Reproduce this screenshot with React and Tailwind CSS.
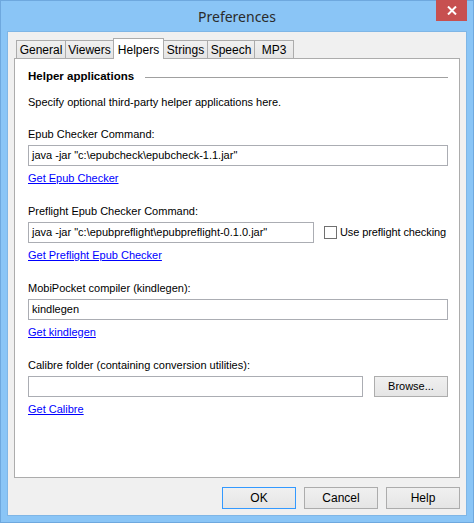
import { useState } from "react";

const tabs = [
  { name: "General", w: "w-[50px]" },
  { name: "Viewers", w: "w-[49px]" },
  { name: "Helpers", w: "w-[51px]" },
  { name: "Strings", w: "w-[45px]" },
  { name: "Speech", w: "w-[48px]" },
  { name: "MP3", w: "w-[40px]" },
];

function Field({ label, value, link, children }) {
  return (
    <div className="flex flex-col">
      <div className="h-4 leading-4">{label}</div>
      <div className="mt-[3px] flex items-center h-[21px]">
        {/* campo de texto */}
        <div className="h-[21px] flex-1 min-w-0 border border-[#abadb3] bg-white px-[3px] leading-[19px] whitespace-nowrap overflow-hidden">
          {value}
        </div>
        {children}
      </div>
      <div className="mt-[4px] h-4 leading-4">
        <a href="#" className="text-[#0000ff] underline">
          {link}
        </a>
      </div>
    </div>
  );
}

function DlgButton({ label, focused }) {
  return (
    <button
      type="button"
      className={
        "h-[22px] w-[74px] border bg-gradient-to-b from-[#f0f0f0] to-[#e5e5e5] text-black leading-[20px] " +
        (focused ? "border-[#3399ff]" : "border-[#acacac]")
      }
    >
      {label}
    </button>
  );
}

export default function App() {
  const [active, setActive] = useState("Helpers");
  const [usePreflight, setUsePreflight] = useState(false);

  return (
    <div
      className="w-[474px] h-[523px] bg-[#8ac5f6] border border-[#6ea8de] flex flex-col text-[11px] text-black"
      style={{ fontFamily: '"Liberation Sans", Arial, sans-serif' }}
    >
      {/* barra de título */}
      <div className="relative h-[30px] flex items-center justify-center">
        <span className="text-[14px] text-[#2b2b2b]" style={{ fontFamily: '"Noto Sans", sans-serif' }}>
          Preferences
        </span>
        <div className="absolute top-[-1px] right-[6px] w-[31px] h-[21px] bg-[#c75050] flex items-center justify-center">
          <svg width="10" height="9" viewBox="0 0 10 9">
            <path d="M1 0.5 L9 8.5 M9 0.5 L1 8.5" stroke="white" strokeWidth="2" />
          </svg>
        </div>
      </div>

      {/* área cliente */}
      <div className="mx-[6px] mb-[6px] flex-1 bg-[#f0f0f0] border border-[#7fb6e6] flex flex-col px-[6px] pt-[6px] pb-[6px]">
        {/* pestañas */}
        <div className="relative z-10 flex items-end h-[20px] pl-[2px]">
          {tabs.map((t, i) => {
            const sel = t.name === active;
            return (
              <div
                key={t.name}
                onClick={() => setActive(t.name)}
                className={
                  t.w +
                  " border border-[#acacac] flex justify-center text-[12px] " +
                  (i > 0 ? "-ml-px " : "") +
                  (sel
                    ? "relative z-10 h-[21px] -mb-px bg-white border-b-0 items-start pt-[2px]"
                    : "h-[18px] bg-gradient-to-b from-[#f0f0f0] to-[#e5e5e5] border-b-0 items-center pt-[1px]")
                }
              >
                {t.name}
              </div>
            );
          })}
        </div>

        {/* panel */}
        <div className="h-[420px] bg-white border border-[#acacac] pl-[13px] pr-[11px] pt-[10px] flex flex-col text-[11px]">
          <div className="flex items-center h-4">
            <span className="font-bold text-[11.5px]">Helper applications</span>
            <div className="ml-[11px] flex-1 h-px bg-[#a0a0a0]" />
          </div>
          <div className="mt-[9px] h-4 leading-4">Specify optional third-party helper applications here.</div>

          <div className="mt-[16px] flex flex-col gap-[17px]">
            <Field
              label="Epub Checker Command:"
              value={'java -jar "c:\\epubcheck\\epubcheck-1.1.jar"'}
              link="Get Epub Checker"
            />
            <Field
              label="Preflight Epub Checker Command:"
              value={'java -jar "c:\\epubpreflight\\epubpreflight-0.1.0.jar"'}
              link="Get Preflight Epub Checker"
            >
              <label className="ml-[10px] w-[124px] shrink-0 flex items-center gap-[3px] whitespace-nowrap">
                <span
                  onClick={() => setUsePreflight(!usePreflight)}
                  className="w-[13px] h-[13px] shrink-0 border border-[#707070] bg-white flex items-center justify-center text-[10px] leading-none"
                >
                  {usePreflight ? "✓" : ""}
                </span>
                <span className="tracking-[-0.1px]">Use preflight checking</span>
              </label>
            </Field>
            <Field label="MobiPocket compiler (kindlegen):" value="kindlegen" link="Get kindlegen" />
            <Field label="Calibre folder (containing conversion utilities):" value="" link="Get Calibre">
              <button
                type="button"
                className="ml-[11px] h-[21px] w-[74px] shrink-0 border border-[#adadad] bg-gradient-to-b from-[#f0f0f0] to-[#e5e5e5] leading-[19px]"
              >
                Browse...
              </button>
            </Field>
          </div>
        </div>

        {/* botones */}
        <div className="mt-[9px] flex justify-end gap-[8px] text-[12px]">
          <DlgButton label="OK" focused />
          <DlgButton label="Cancel" />
          <DlgButton label="Help" />
        </div>
      </div>
    </div>
  );
}
